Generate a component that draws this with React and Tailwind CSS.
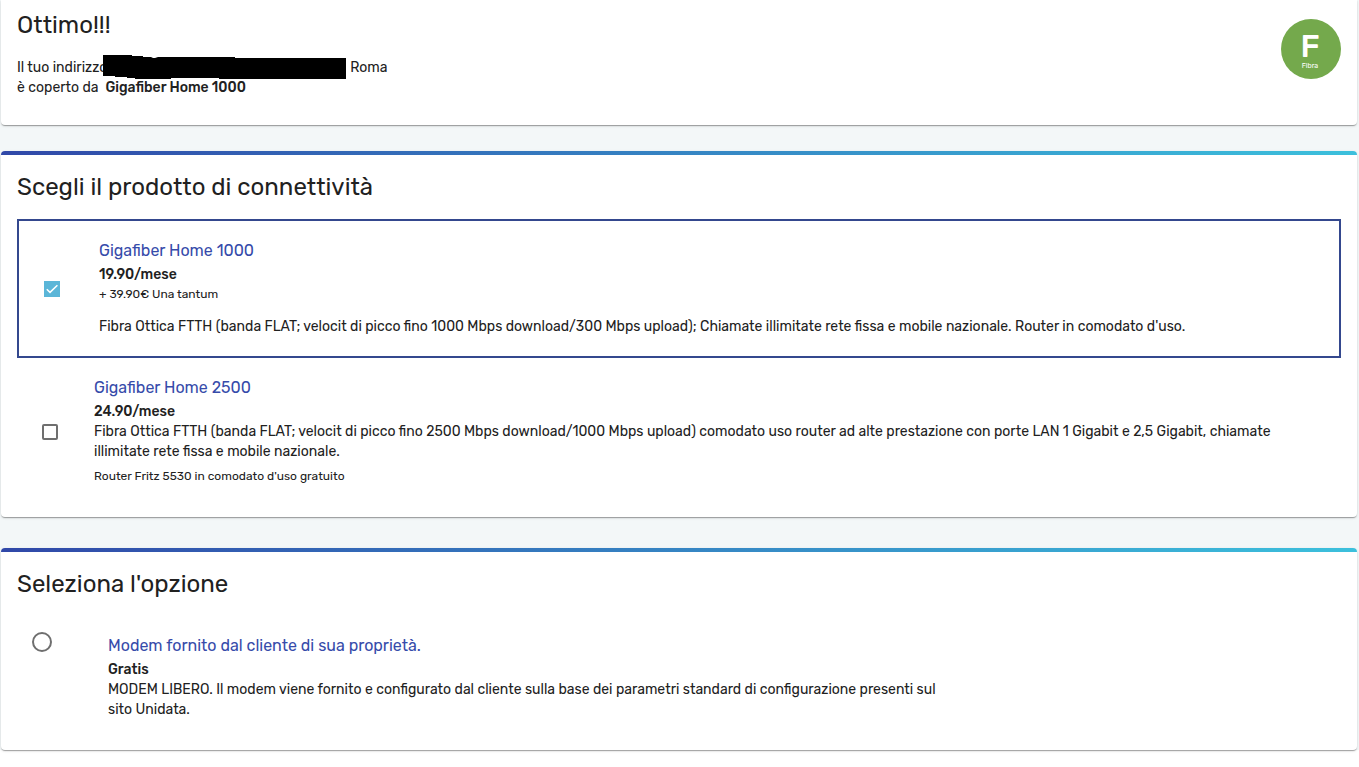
import { useState } from 'react';

function Card({ title, accent, className, children }) {
  return (
    <section className={`bg-white overflow-hidden shadow-[0_2px_1px_-1px_rgba(0,0,0,0.2),0_1px_1px_0_rgba(0,0,0,0.14),0_1px_3px_0_rgba(0,0,0,0.12)] ${className}`}>
      {accent && <div className="h-1 bg-linear-to-r from-[#3048a8] to-[#3cc0dc]" />}
      <div className="px-4">
        {title && <h2 className="pt-4 text-2xl leading-8">{title}</h2>}
        {children}
      </div>
    </section>
  );
}

function Checkbox({ id, checked, onChange }) {
  return (
    <span className="relative block size-4 shrink-0">
      <input
        id={id}
        type="checkbox"
        checked={checked}
        onChange={onChange}
        className="block size-4 appearance-none rounded-xs border-2 border-[#6f6f6f] bg-white checked:rounded-none checked:border-[#5bb6d8] checked:bg-[#5bb6d8]"
      />
      {checked && (
        <svg viewBox="0 0 16 16" className="pointer-events-none absolute inset-0 size-4" fill="none" stroke="#fff" strokeWidth="1.5">
          <path d="M2.8 8.3 6 11.4 13.4 4.2" />
        </svg>
      )}
    </span>
  );
}

function FibraBadge() {
  return (
    <div className="flex size-15 shrink-0 flex-col items-center rounded-full bg-[#74a94c] pt-[11px] pr-0.5 font-['Rubik','Open_Sans',sans-serif] text-white">
      <span className="text-[32px] leading-8 font-medium">F</span>
      <span className="text-[7px] leading-2">Fibra</span>
    </div>
  );
}

export default function App() {
  const [product, setProduct] = useState('1000');
  const [modem, setModem] = useState('');

  return (
    <main className="bg-[linear-gradient(#f3f7f8_calc(100%_-_16px),#fff_0)] pr-0.5 pb-4 pl-px font-['Rubik','Roboto',sans-serif] text-sm leading-5 text-[#212121]">
      <Card className="rounded-b">
        <div className="flex justify-between pt-[9px] pb-[27px]">
          <div>
            <h1 className="text-2xl leading-8">Ottimo!!!</h1>
            <p className="mt-[17px] flex">
              Il tuo indirizzo
              <svg viewBox="0 0 243 24" className="relative -mt-[3px] -mb-px -ml-1 mr-1 h-6 w-[243px]">
                <path d="M0 0H29V1H40V2H48L50 3H52L55 2H132V3H243V24H116V23H68V24H32V23H24V22H12V21H0Z" />
              </svg>
              Roma
            </p>
            <p>è coperto da&nbsp; <span className="font-medium">Gigafiber Home 1000</span></p>
          </div>
          <div className="pt-2.5">
            <FibraBadge />
          </div>
        </div>
      </Card>

      <Card title="Scegli il prodotto di connettività" accent className="mt-6.5 rounded">
        <div className="mt-4 flex items-center border-2 border-[#34488e] pt-5 pb-[19px] pl-[25px]">
          <Checkbox id="gf1000" checked={product === '1000'} onChange={() => setProduct('1000')} />
          <label htmlFor="gf1000" className="ml-[39px] block">
            <span className="block text-base leading-5 text-[#364baa]">Gigafiber Home 1000</span>
            <span className="mt-1 block font-medium">19.90/mese</span>
            <span className="block text-xs leading-[18px]">+ 39.90€ Una tantum</span>
            <span className="mt-3.5 block">Fibra Ottica FTTH (banda FLAT; velocit di picco fino 1000 Mbps download/300 Mbps upload); Chiamate illimitate rete fissa e mobile nazionale. Router in comodato d'uso.</span>
          </label>
        </div>
        <div className="flex items-center pt-5 pr-14 pb-[31px] pl-[25px]">
          <Checkbox id="gf2500" checked={product === '2500'} onChange={() => setProduct('2500')} />
          <label htmlFor="gf2500" className="ml-9 block">
            <span className="block text-base leading-5 text-[#364baa]">Gigafiber Home 2500</span>
            <span className="mt-1 block font-medium">24.90/mese</span>
            <span className="block">Fibra Ottica FTTH (banda FLAT; velocit di picco fino 2500 Mbps download/1000 Mbps upload) comodato uso router ad alte prestazione con porte LAN 1 Gigabit e 2,5 Gigabit, chiamate illimitate rete fissa e mobile nazionale.</span>
            <span className="mt-1 block text-xs leading-5">Router Fritz 5530 in comodato d'uso gratuito</span>
          </label>
        </div>
      </Card>

      <Card title="Seleziona l'opzione" accent className="mt-[31px] rounded">
        <div className="flex items-start pt-8 pb-[30px] pl-[15px]">
          <input
            id="modem"
            type="radio"
            name="modem"
            checked={modem === 'libero'}
            onChange={() => setModem('libero')}
            className="size-5 shrink-0 appearance-none rounded-full border-2 border-[#6f6f6f] bg-white checked:border-[#5bb6d8] checked:bg-[#5bb6d8]"
          />
          <label htmlFor="modem" className="mt-1 ml-14 block max-w-[832px]">
            <span className="block text-base leading-5 text-[#364baa]">Modem fornito dal cliente di sua proprietà.</span>
            <span className="mt-1 block font-medium">Gratis</span>
            <span className="block">MODEM LIBERO. Il modem viene fornito e configurato dal cliente sulla base dei parametri standard di configurazione presenti sul sito Unidata.</span>
          </label>
        </div>
      </Card>
    </main>
  );
}
